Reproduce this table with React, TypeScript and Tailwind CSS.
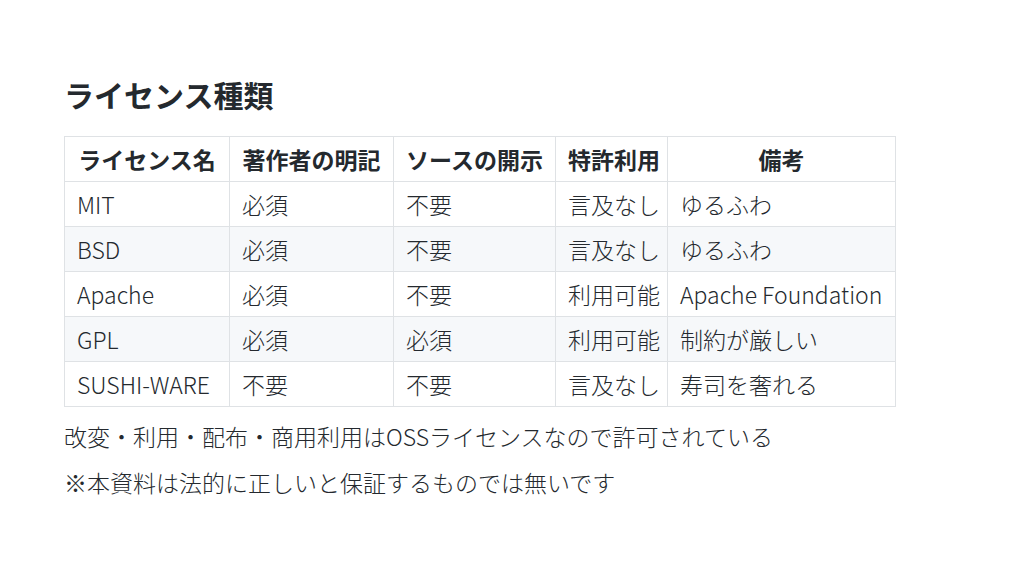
const font = { fontFamily: '"Noto Sans CJK JP", "Noto Sans", sans-serif' };

const headers = ['ライセンス名', '著作者の明記', 'ソースの開示', '特許利用', '備考'];
const widths = ['w-[165px]', 'w-[164px]', 'w-[162px]', 'w-[112px]', 'w-[228px]'];

const rows = [
  ['MIT', '必須', '不要', '言及なし', 'ゆるふわ'],
  ['BSD', '必須', '不要', '言及なし', 'ゆるふわ'],
  ['Apache', '必須', '不要', '利用可能', 'Apache Foundation'],
  ['GPL', '必須', '必須', '利用可能', '制約が厳しい'],
  ['SUSHI-WARE', '不要', '不要', '言及なし', '寿司を奢れる'],
];

export default function App() {
  return (
    <div className="w-[1024px] h-[576px] bg-white text-[#24292e] font-light px-[64px] pt-[75px]" style={font}>
      <h1 className="text-[30px] leading-[38px] font-bold">ライセンス種類</h1>
      <table className="mt-[23px] table-fixed border-collapse w-[831px] text-[23px]">
        <thead>
          <tr className="h-[45px]">
            {headers.map((h, i) => (
              <th key={h} className={`${widths[i]} border border-[#dfe2e5] px-[12px] font-bold text-center whitespace-nowrap`}>
                {h}
              </th>
            ))}
          </tr>
        </thead>
        <tbody>
          {rows.map((r, ri) => (
            <tr key={r[0]} className={ri % 2 === 1 ? 'h-[45px] bg-[#f6f8fa]' : 'h-[45px] bg-white'}>
              {r.map((c, ci) => (
                <td key={ci} className="border border-[#dfe2e5] px-[12px] whitespace-nowrap">
                  {c}
                </td>
              ))}
            </tr>
          ))}
        </tbody>
      </table>
      <p className="mt-[12px] text-[23px] leading-[34px]">改変・利用・配布・商用利用はOSSライセンスなので許可されている</p>
      <p className="mt-[12px] text-[23px] leading-[34px]">※本資料は法的に正しいと保証するものでは無いです</p>
    </div>
  );
}
